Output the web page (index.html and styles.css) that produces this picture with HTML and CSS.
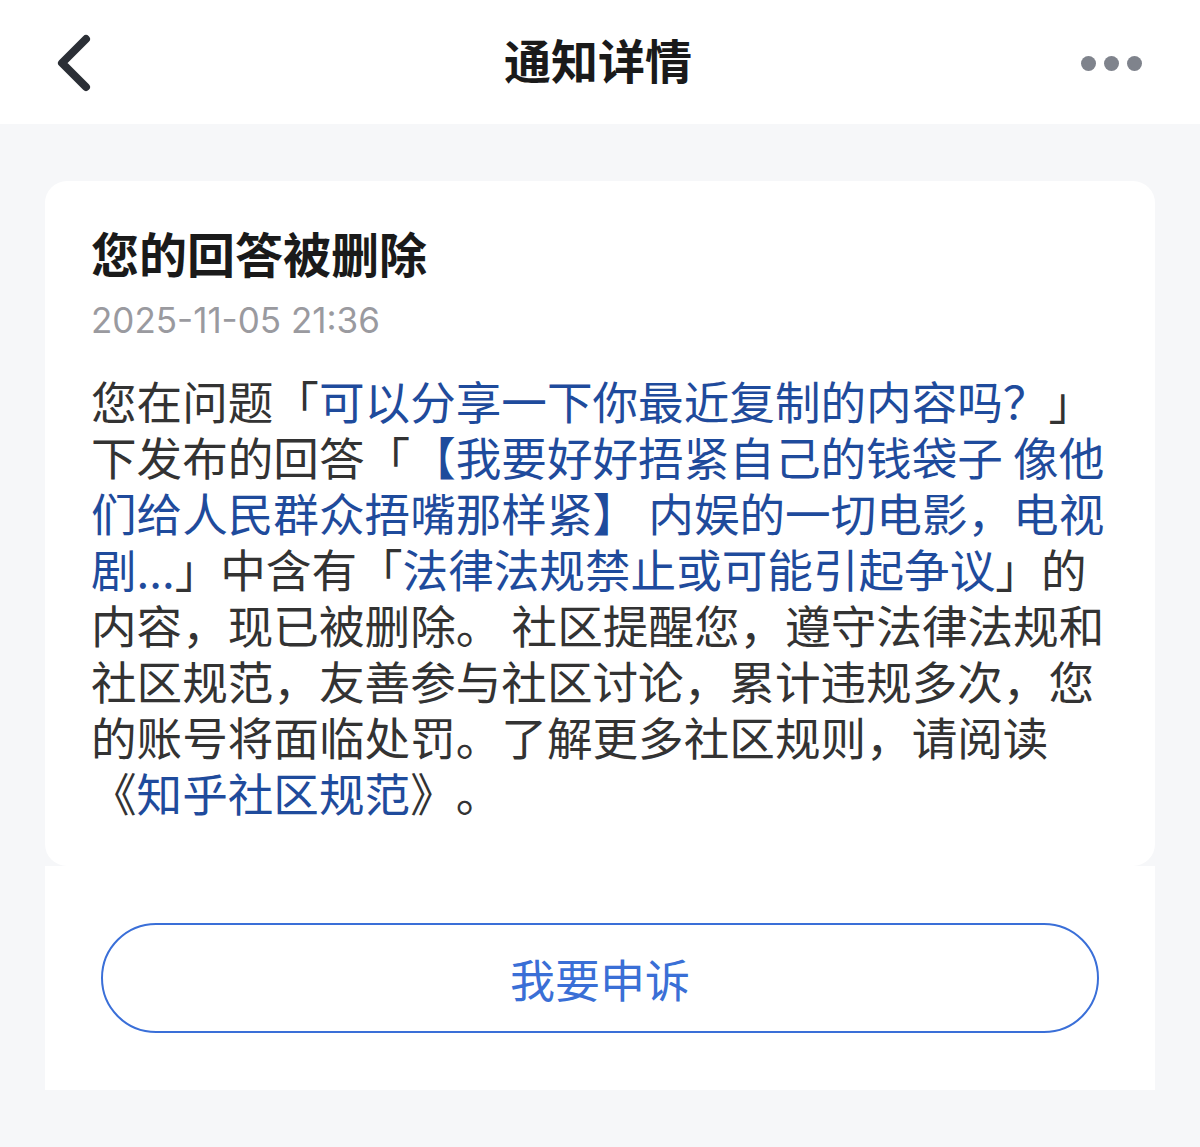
FILE: index.html
```html
<!DOCTYPE html>
<html lang="zh-CN">
<head>
    <meta charset="UTF-8">
    <meta name="viewport" content="width=device-width, initial-scale=1.0">
    <title>通知详情</title>
    <link rel="stylesheet" href="styles.css">
</head>
<body>
    <header class="topbar">
        <a class="back" href="#">
            <svg width="48" height="64" viewBox="0 0 48 64">
                <polyline points="32,9 8,33 32,57" fill="none" stroke="#2b2f36" stroke-width="8" stroke-linecap="round" stroke-linejoin="round"/>
            </svg>
        </a>
        <h1 class="topbar-title">通知详情</h1>
        <div class="more">
            <span class="dot"></span>
            <span class="dot"></span>
            <span class="dot"></span>
        </div>
    </header>

    <main class="page">
        <section class="card">
            <h2 class="card-title">您的回答被删除</h2>
            <div class="card-date">2025-11-05 21:36</div>
            <p class="card-body">您在问题「<a href="#">可以分享一下你最近复制的内容吗？</a>」下发布的回答「<a href="#">【我要好好捂紧自己的钱袋子 像他们给人民群众捂嘴那样紧】 内娱的一切电影，电视剧...</a>」中含有「<a href="#">法律法规禁止或可能引起争议</a>」的内容，现已被删除。 社区提醒您，遵守法律法规和社区规范，友善参与社区讨论，累计违规多次，您的账号将面临处罚。了解更多社区规则，请阅读《<a href="#">知乎社区规范</a>》。</p>
        </section>
        <section class="actions">
            <button class="appeal">我要申诉</button>
        </section>
    </main>
</body>
</html>
```

FILE: styles.css
```css
body {
    margin: 0;
    background-color: #f6f7f9;
    font-family: "Noto Sans CJK SC", sans-serif;
    color: #333;
    text-spacing-trim: space-all;
}

.topbar {
    height: 124px;
    background-color: #fff;
    display: flex;
    align-items: center;
    justify-content: space-between;
    padding: 0 58px 0 54px;
}

.back {
    display: flex;
    width: 120px;
}

.topbar-title {
    margin: 0;
    padding-bottom: 8px;
    font-size: 47px;
    font-weight: 700;
    color: #1a1a1a;
    line-height: 1;
}

.more {
    width: 120px;
    display: flex;
    justify-content: flex-end;
    gap: 8px;
    padding-top: 2px;
}

.dot {
    width: 15px;
    height: 15px;
    border-radius: 50%;
    background-color: #7f838c;
}

.page {
    padding: 57px 45px 0;
}

.card {
    background-color: #fff;
    border-radius: 22px;
    padding: 43px 44px 46px 46px;
}

.card-title {
    margin: 0;
    font-size: 48px;
    font-weight: 700;
    line-height: 56px;
    color: #1a1a1a;
}

.card-date {
    margin-top: 20px;
    font-family: "Inter", sans-serif;
    font-size: 35px;
    line-height: 40px;
    color: #9a9a9f;
}

.card-body {
    margin: 32px 0 0;
    font-size: 45.6px;
    line-height: 56px;
    color: #333;
}

.card-body a {
    color: #1f4b9c;
    text-decoration: none;
}

.actions {
    background-color: #fff;
    padding: 57px 56px 57px 56px;
}

.appeal {
    display: block;
    width: 100%;
    height: 110px;
    border: 2.5px solid #3a6fd8;
    border-radius: 55px;
    background-color: #fff;
    font-family: "Noto Sans CJK SC", sans-serif;
    font-size: 45px;
    color: #3a6fd6;
    cursor: pointer;
}
```
